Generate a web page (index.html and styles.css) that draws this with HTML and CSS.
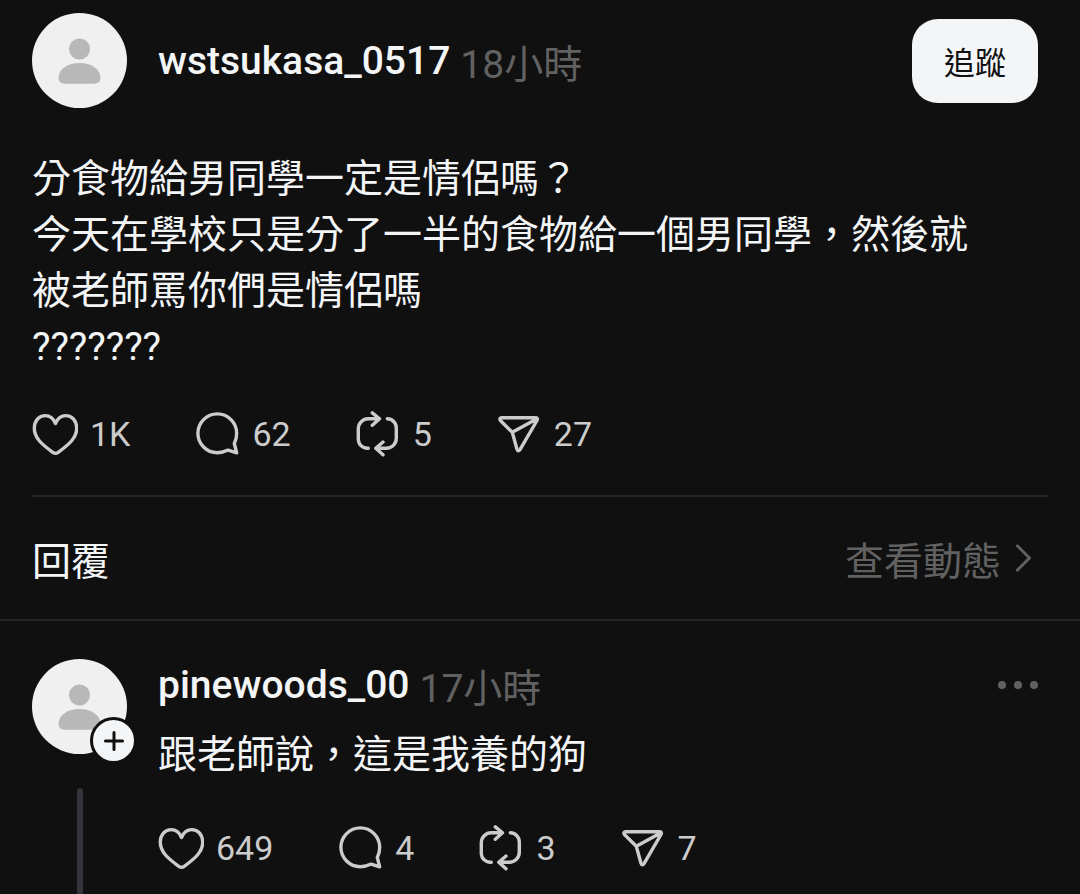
FILE: index.html
```html
<!DOCTYPE html>
<html lang="zh-Hant">
<head>
    <meta charset="UTF-8">
    <meta name="viewport" content="width=device-width, initial-scale=1.0">
    <title>串文</title>
    <link rel="stylesheet" href="styles.css">
</head>
<body>
    <svg class="sprite" aria-hidden="true">
        <symbol id="icon-user" viewBox="0 0 95 95">
            <circle cx="47.5" cy="36" r="10.5"/>
            <path d="M26.500 65C26.500 56 36 50 47.500 50S68.500 56 68.500 65C68.500 68.500 66 70.700 62.500 70.700H32.500C29 70.700 26.500 68.500 26.500 65Z"/>
        </symbol>
        <symbol id="icon-heart" viewBox="0 0 46 46">
            <path d="M23.500 12.500C21.500 7.500 17.500 4.600 13.200 4.600C7 4.600 2.300 10 2.300 17.300C2.300 27 10 33.500 20.800 41.300Q23.500 43.200 26.200 41.300C37 33.500 44.700 27 44.700 17.300C44.700 10 40 4.600 33.800 4.600C29.500 4.600 25.500 7.500 23.500 12.500Z"/>
        </symbol>
        <symbol id="icon-comment" viewBox="0 0 46 46">
            <path d="M42.700 41.900L34.200 39.100C31 40.700 27.300 41.700 23.300 41.700A19.400 19.400 0 1 1 42.700 22.300C42.700 26.200 41.800 29.600 40.300 32.500Z"/>
        </symbol>
        <symbol id="icon-repost" viewBox="0 0 46 46">
            <path d="M17.300 1.900L24.500 7.800L17.300 14.300M24.500 7.800H13.300A10 10 0 0 0 3.300 17.800V28.300A9 9 0 0 0 12.300 37.300H13.300"/>
            <path d="M28 31L20.800 37.300L28 43.800M20.800 37.300H31.300A10 10 0 0 0 41.300 27.300V16.800A9 9 0 0 0 32.300 7.800"/>
        </symbol>
        <symbol id="icon-send" viewBox="0 0 46 46">
            <path d="M5.500 6.700H39.200Q42.500 6.700 41 9.500L24.300 38.200Q22 41.500 20.900 38L16.300 21.300L4.600 9.800Q2.800 7 5.500 6.700ZM16.300 21.300L41 7.800"/>
        </symbol>
    </svg>

    <main class="thread">
        <article class="post">
            <header class="post-header">
                <span class="avatar"><svg><use href="#icon-user"/></svg></span>
                <div class="byline">
                    <a class="username" href="#">wstsukasa_0517</a>
                    <time class="time">18小時</time>
                </div>
                <button class="follow" type="button">追蹤</button>
            </header>
            <p class="text post-text">分食物給男同學一定是情侶嗎？<br>今天在學校只是分了一半的食物給一個男同學，然後就被老師罵你們是情侶嗎<br>???????</p>
            <div class="actions">
                <button class="action" type="button" aria-label="讚 1K"><svg><use href="#icon-heart"/></svg>1K</button>
                <button class="action" type="button" aria-label="回覆 62"><svg><use href="#icon-comment"/></svg>62</button>
                <button class="action" type="button" aria-label="轉發 5"><svg><use href="#icon-repost"/></svg>5</button>
                <button class="action" type="button" aria-label="分享 27"><svg><use href="#icon-send"/></svg>27</button>
            </div>
        </article>

        <div class="replies-bar">
            <h2 class="replies-title">回覆</h2>
            <a class="activity" href="#">查看動態
                <svg class="chevron" viewBox="0 0 16 30"><path d="M1.500 2L14.500 15L1.500 28"/></svg>
            </a>
        </div>

        <article class="reply">
            <div class="reply-side">
                <span class="avatar">
                    <svg><use href="#icon-user"/></svg>
                    <button class="add" type="button" aria-label="追蹤 pinewoods_00"><svg viewBox="0 0 24 24"><path d="M12 3.500V20.500M3.500 12H20.500"/></svg></button>
                </span>
                <span class="thread-line"></span>
            </div>
            <div class="reply-main">
                <div class="reply-header">
                    <div class="byline">
                        <a class="username" href="#">pinewoods_00</a>
                        <time class="time">17小時</time>
                    </div>
                    <button class="more" type="button" aria-label="更多"><svg viewBox="0 0 40 8"><circle cx="4" cy="4" r="4"/><circle cx="20" cy="4" r="4"/><circle cx="36" cy="4" r="4"/></svg></button>
                </div>
                <p class="text">跟老師說，這是我養的狗</p>
                <div class="actions">
                    <button class="action" type="button" aria-label="讚 649"><svg><use href="#icon-heart"/></svg>649</button>
                    <button class="action" type="button" aria-label="回覆 4"><svg><use href="#icon-comment"/></svg>4</button>
                    <button class="action" type="button" aria-label="轉發 3"><svg><use href="#icon-repost"/></svg>3</button>
                    <button class="action" type="button" aria-label="分享 7"><svg><use href="#icon-send"/></svg>7</button>
                </div>
            </div>
        </article>
    </main>
</body>
</html>
```
FILE: styles.css
```css
* {
    box-sizing: border-box;
}

body {
    margin: 0;
    background-color: #101010;
    color: #f3f5f7;
    font-family: Roboto, "Noto Sans CJK TC", sans-serif;
    font-size: 39px;
}

button {
    padding: 0;
    border: none;
    background: none;
    color: inherit;
    font-family: inherit;
    cursor: pointer;
}

a {
    color: inherit;
    text-decoration: none;
}

svg {
    display: block;
    fill: none;
}

.sprite {
    position: absolute;
    width: 0;
    height: 0;
}

.thread {
    display: flex;
    flex-direction: column;
    min-height: 100vh;
}

.post {
    margin: 0 31px;
    padding: 13px 0 38px 1px;
    border-bottom: 2px solid #242424;
}

.post-header {
    display: flex;
    align-items: center;
    gap: 31px;
    padding-right: 11px;
}

.avatar {
    position: relative;
    flex: none;
    width: 95px;
    height: 95px;
    border-radius: 50%;
    background-color: #f0f0f0;
}

.avatar > svg {
    width: 95px;
    height: 95px;
    fill: #b8b8b8;
}

.byline {
    display: flex;
    flex: 1;
    align-items: center;
    gap: 10px;
}

.username {
    font-weight: 500;
}

.time {
    color: #616161;
}

.follow {
    width: 126px;
    height: 84px;
    border-radius: 26px;
    background-color: #f3f5f7;
    color: #101010;
    font-size: 31px;
}

.text {
    margin: 0;
    line-height: 56px;
}

.post-text {
    margin-top: 43px;
    padding-right: 64px;
}

.actions {
    display: flex;
    gap: 64px;
    margin-top: 36px;
}

.action {
    display: flex;
    align-items: center;
    gap: 12px;
    color: #ccc;
    font-size: 34px;
    line-height: 46px;
}

.action svg {
    width: 46px;
    height: 46px;
    stroke: #ccc;
    stroke-width: 3.4;
    stroke-linecap: round;
    stroke-linejoin: round;
}

.replies-bar {
    display: flex;
    align-items: center;
    justify-content: space-between;
    height: 124px;
    padding: 0 49px 0 32px;
    border-bottom: 2px solid #242424;
}

.replies-title {
    margin: 0;
    font-size: 39px;
    font-weight: 400;
}

.activity {
    display: flex;
    align-items: center;
    gap: 14px;
    color: #616161;
}

.chevron {
    width: 16px;
    height: 30px;
    stroke: #616161;
    stroke-width: 3;
}

.reply {
    display: flex;
    flex: 1;
    gap: 31px;
    padding: 38px 42px 0 32px;
}

.reply-side {
    display: flex;
    flex-direction: column;
    align-items: center;
    gap: 34px;
}

.add {
    position: absolute;
    right: -10px;
    bottom: -10px;
    display: flex;
    align-items: center;
    justify-content: center;
    width: 47px;
    height: 47px;
    border: 3px solid #101010;
    border-radius: 50%;
    background-color: #f3f5f7;
}

.add svg {
    width: 24px;
    height: 24px;
    stroke: #101010;
    stroke-width: 3;
    stroke-linecap: round;
}

.thread-line {
    flex: 1;
    width: 6px;
    border-radius: 3px 3px 0 0;
    background-color: #323539;
}

.reply-main {
    flex: 1;
    padding-bottom: 22px;
}

.reply-header {
    display: flex;
    align-items: center;
    height: 52px;
}

.more svg {
    width: 40px;
    height: 8px;
    fill: #616161;
}

.reply .text {
    margin-top: 16px;
}

.reply .actions {
    margin-top: 42px;
}
```
